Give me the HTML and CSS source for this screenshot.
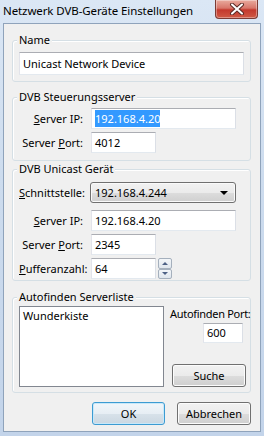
FILE: index.html
```html
<!DOCTYPE html>
<html lang="de">
<head>
  <meta charset="UTF-8">
  <title>Netzwerk DVB-Geräte Einstellungen</title>
  <link rel="stylesheet" href="styles.css">
</head>
<body>
  <div class="window">
    <div class="titlebar">
      <span class="title">Netzwerk DVB-Geräte Einstellungen</span>
      <button class="close-btn" aria-label="Schließen">
        <svg width="16" height="12" viewBox="0 0 16 12">
          <path d="M3 1.5 L13 10.5 M13 1.5 L3 10.5" stroke="#5a2a25" stroke-width="4" stroke-linecap="round"/>
          <path d="M3 1.5 L13 10.5 M13 1.5 L3 10.5" stroke="#ffffff" stroke-width="2" stroke-linecap="round"/>
        </svg>
      </button>
    </div>

    <div class="client">
      <div class="group group-name">
        <div class="group-title">Name</div>
        <div class="textbox wide-name">Unicast Network Device</div>
      </div>

      <div class="group group-server">
        <div class="group-title">DVB Steuerungsserver</div>
        <div class="form-grid">
          <label><u>S</u>erver IP:</label>
          <div class="textbox wide"><span class="selected">192.168.4.20</span></div>
          <label>Server <u>P</u>ort:</label>
          <div class="textbox short">4012</div>
        </div>
      </div>

      <div class="group group-unicast">
        <div class="group-title">DVB Unicast Gerät</div>
        <div class="form-grid">
          <label><u>S</u>chnittstelle:</label>
          <div class="combo">
            <span>192.168.4.244</span>
            <span class="combo-arrow"></span>
          </div>
          <label class="gap-top"><u>S</u>erver IP:</label>
          <div class="textbox wide gap-top">192.168.4.20</div>
          <label>Server <u>P</u>ort:</label>
          <div class="textbox short">2345</div>
          <label><u>P</u>ufferanzahl:</label>
          <div class="spin">
            <div class="textbox short">64</div>
            <div class="spin-buttons">
              <span class="spin-up"></span>
              <span class="spin-down"></span>
            </div>
          </div>
        </div>
      </div>

      <div class="group group-auto">
        <div class="group-title">Autofinden Serverliste</div>
        <div class="auto-body">
          <div class="listbox">
            <div class="list-item">Wunderkiste</div>
          </div>
          <div class="auto-side">
            <div class="side-label">Autofinden Port:</div>
            <div class="textbox port">600</div>
            <button class="btn suche">Suche</button>
          </div>
        </div>
      </div>

      <div class="dialog-buttons">
        <button class="btn default">OK</button>
        <button class="btn">Abbrechen</button>
      </div>
    </div>
  </div>
</body>
</html>
```

FILE: styles.css
```css
body { margin: 0; font-family: "Noto Sans", "Open Sans", sans-serif; font-size: 11px; color: #000; }
.window {
  width: 264px; height: 436px; box-sizing: border-box;
  background: linear-gradient(180deg, #dbe7f5 0%, #cddcee 40%, #c3d4ea 100%);
}
.titlebar { display: flex; align-items: flex-start; height: 23px; }
.title { padding: 0 0 0 3px; line-height: 22px; font-size: 11.5px; letter-spacing: -0.1px; color: #000; }
.close-btn {
  margin-left: auto; margin-right: 6px; width: 43px; height: 19px; padding: 0;
  border: 1px solid #7b3b34; border-top: none; border-radius: 0 0 4px 4px;
  background: linear-gradient(180deg, #e9ab9e 0%, #d8766a 45%, #c4392d 55%, #cf5a45 100%);
  display: flex; align-items: center; justify-content: center;
  box-shadow: inset 0 0 0 1px rgba(255, 255, 255, 0.35);
}
.client {
  margin: 0 3px; height: 409px; box-sizing: border-box;
  background: #f0f0f0; border: 1px solid #8fa3bb;
  padding: 16px 9px 0 8px;
}

.group { border: 1px solid #d5dfe5; border-radius: 3px; padding: 0 6px 6px; box-shadow: inset 1px 1px 0 #fff; }
.group-title {
  width: max-content; margin: -8px 0 0 -2px; padding: 0 2px;
  line-height: 14px; height: 14px; background: #f0f0f0;
}
.group-server { margin-top: 15px; padding-bottom: 7px; }
.group-unicast { margin-top: 8px; padding-bottom: 1px; }
.group-auto { margin-top: 16px; padding-bottom: 5px; padding-right: 0; }

.textbox {
  box-sizing: border-box; height: 21px; background: #fff;
  border: 1px solid; border-color: #abadb3 #dbdfe6 #e3e9ef #e2e3ea;
  padding: 0 3px; line-height: 19px; white-space: nowrap; overflow: hidden;
}
.wide-name { height: 23px; line-height: 21px; margin-top: 5px; width: 225px; }
.wide { width: 145px; }
.short { width: 65px; }
.selected { background: #3399ff; color: #fff; padding: 1px 0; }

.form-grid {
  display: grid; grid-template-columns: 64px auto; column-gap: 8px; row-gap: 3px;
  margin-top: 4px; align-items: center;
}
.form-grid label { text-align: right; line-height: 21px; white-space: nowrap; }
.group-unicast .form-grid { margin-top: 6px; }
.gap-top { margin-top: 4px; }

.combo {
  box-sizing: border-box; width: 146px; height: 21px; margin-left: -1px;
  border: 1px solid #707070; border-radius: 3px;
  background: linear-gradient(180deg, #f2f2f2 0%, #ebebeb 50%, #dddddd 50%, #cfcfcf 100%);
  box-shadow: inset 0 0 0 1px #fafafa;
  display: flex; align-items: center; justify-content: space-between;
  padding: 0 7px 0 4px; line-height: 19px;
}
.combo-arrow { width: 0; height: 0; border-left: 4px solid transparent; border-right: 4px solid transparent; border-top: 4px solid #000; }

.spin { display: flex; gap: 2px; }
.spin-buttons { display: flex; flex-direction: column; width: 14px; height: 21px; }
.spin-buttons span {
  flex: 1; box-sizing: border-box; border: 1px solid #a5b0bd; border-radius: 2px;
  background: linear-gradient(180deg, #f3f6f9, #dfe6ed);
  display: flex; align-items: center; justify-content: center;
}
.spin-up::after { content: ""; border-left: 3px solid transparent; border-right: 3px solid transparent; border-bottom: 3px solid #4d6185; }
.spin-down::after { content: ""; border-left: 3px solid transparent; border-right: 3px solid transparent; border-top: 3px solid #4d6185; }

.auto-body { display: flex; gap: 6px; margin-top: 2px; }
.listbox { box-sizing: border-box; width: 145px; height: 81px; background: #fff; border: 1px solid #828790; padding: 2px 3px; }
.list-item { line-height: 14px; }
.auto-side { width: 80px; display: flex; flex-direction: column; padding-top: 1px; }
.side-label { line-height: 14px; white-space: nowrap; letter-spacing: -0.3px; }
.port { width: 40px; height: 20px; line-height: 18px; margin: 2px 0 0 33px; }

.btn {
  box-sizing: border-box; height: 23px; font-family: inherit; font-size: 11px; color: #000;
  border: 1px solid #707070; border-radius: 3px; padding: 0;
  background: linear-gradient(180deg, #f2f2f2 0%, #ebebeb 50%, #dddddd 50%, #cfcfcf 100%);
  box-shadow: inset 0 0 0 1px #fcfcfc;
}
.suche { width: 74px; margin: 21px 0 0 2px; }
.dialog-buttons { display: flex; justify-content: flex-end; gap: 12px; margin-top: 9px; }
.dialog-buttons .btn { width: 74px; }
.dialog-buttons .default {
  width: 73px; border-color: #3c9bd2;
  background: linear-gradient(180deg, #f1f6fa 0%, #e7eef4 50%, #d8e2ea 50%, #cbd7e1 100%);
  box-shadow: inset 0 0 0 1px #c8e8f9;
}
```
